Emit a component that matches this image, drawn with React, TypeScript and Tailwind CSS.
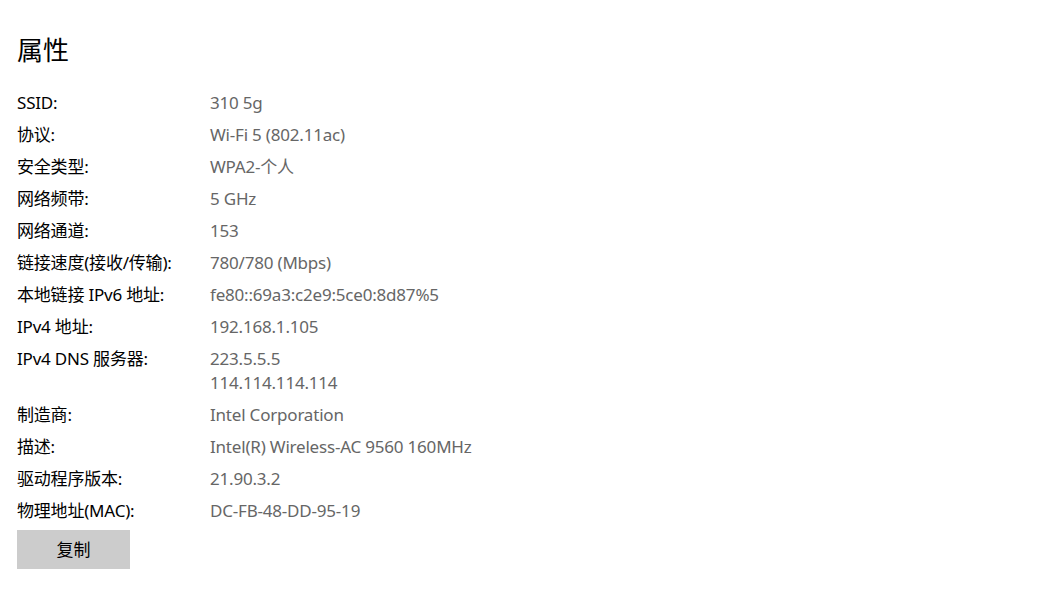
const rows: { label: string; value: string[] }[] = [
  { label: 'SSID:', value: ['310 5g'] },
  { label: '协议:', value: ['Wi-Fi 5 (802.11ac)'] },
  { label: '安全类型:', value: ['WPA2-个人'] },
  { label: '网络频带:', value: ['5 GHz'] },
  { label: '网络通道:', value: ['153'] },
  { label: '链接速度(接收/传输):', value: ['780/780 (Mbps)'] },
  { label: '本地链接 IPv6 地址:', value: ['fe80::69a3:c2e9:5ce0:8d87%5'] },
  { label: 'IPv4 地址:', value: ['192.168.1.105'] },
  { label: 'IPv4 DNS 服务器:', value: ['223.5.5.5', '114.114.114.114'] },
  { label: '制造商:', value: ['Intel Corporation'] },
  { label: '描述:', value: ['Intel(R) Wireless-AC 9560 160MHz'] },
  { label: '驱动程序版本:', value: ['21.90.3.2'] },
  { label: '物理地址(MAC):', value: ['DC-FB-48-DD-95-19'] },
];

export default function App() {
  return (
    <div className="min-h-[603px] w-[1052px] bg-white pl-[17px] pt-[33px] font-['Noto_Sans','Noto_Sans_CJK_SC',sans-serif] text-black">
      <h1 className="text-[26px] leading-[34px]">属性</h1>

      <dl className="mt-[20px] text-[17px] tracking-[-0.2px]">
        {rows.map((r) => (
          <div key={r.label} className="flex py-1">
            <dt className="w-[193px] shrink-0 leading-6">{r.label}</dt>
            <dd className="leading-6 text-[#666666]">
              {r.value.map((v) => (
                <div key={v}>{v}</div>
              ))}
            </dd>
          </div>
        ))}
      </dl>

      <button className="mt-[3px] h-[39px] w-[113px] bg-[#cccccc] text-[17px]">复制</button>
    </div>
  );
}
